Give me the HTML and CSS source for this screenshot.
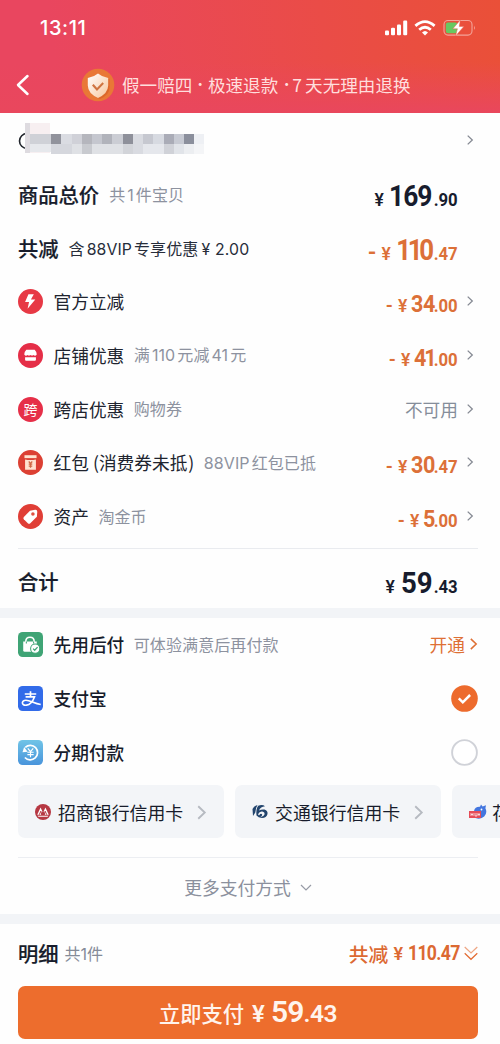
FILE: index.html
```html
<!DOCTYPE html>
<html lang="zh-CN">
<head>
<meta charset="UTF-8">
<meta name="viewport" content="width=device-width, initial-scale=1">
<title>确认付款</title>
<link rel="stylesheet" href="styles.css">
</head>
<body>
<svg width="0" height="0" class="defs">
  <symbol id="chev" viewBox="0 0 7 12"><path d="M1.2 1.6 5.8 6 1.2 10.4" fill="none" stroke="currentColor" stroke-width="1.3"/></symbol>
</svg>
<header class="header">
  <div class="status">
    <span class="clock">13:11</span>
    <div class="status-icons">
      <svg width="23" height="16" viewBox="0 0 23 16" fill="#fff"><rect x="0" y="10.5" width="4" height="4.8" rx="1.1"/><rect x="6" y="7.8" width="4" height="7.5" rx="1.1"/><rect x="12" y="4.4" width="4" height="10.9" rx="1.1"/><rect x="18.2" y=".6" width="4" height="14.7" rx="1.1"/></svg>
      <svg class="wifi" width="22" height="16" viewBox="0 0 22 16" fill="none" stroke="#fff" stroke-width="2.8"><path d="M1.4 5.9Q11-2.6 20.6 5.9"/><path d="M5.2 9.8Q11 4.8 16.8 9.8"/><path d="M8 12.6Q11 9.6 14 12.6L11 15.6Z" fill="#fff" stroke="none"/></svg>
      <svg class="battery" width="33" height="18" viewBox="0 0 33 18"><rect x="1" y="1.5" width="28" height="14.6" rx="4" fill="none" stroke="#fff" stroke-opacity=".48" stroke-width="1.1"/><rect x="2.8" y="3.4" width="11.5" height="10.9" rx="2.2" fill="#67c961"/><path d="M31 6.4Q32.6 8.6 31 11Z" fill="#fff" opacity=".55"/><path d="M17.3 1 9.8 9.8h4.6l-1.8 7.1 8.3-9.5h-4.6Z" fill="#fff" stroke="#e9614a" stroke-width=".5"/></svg>
    </div>
  </div>
  <div class="nav">
    <svg class="back" width="16" height="22" viewBox="0 0 16 22" fill="none" stroke="#fff" stroke-width="2.5" stroke-linecap="round" stroke-linejoin="round"><path d="M12.5 2 3 11l9.500 9"/></svg>
    <svg class="shield" width="34" height="34" viewBox="0 0 34 34"><defs><linearGradient id="sg" x1="0" y1="0" x2="1" y2="1"><stop stop-color="#fff"/><stop offset="1" stop-color="#f7c69c"/></linearGradient></defs><circle cx="17" cy="17" r="16.3" fill="#e97836"/><path d="m19 8 9.5 3v9q0 7-9.5 11-6-2-9-6Z" fill="#d65d25" opacity=".65"/><path d="M17 5.500Q21 9 27.200 10v7.500Q27 25.500 17 30 7 25.500 6.800 17.500V10Q13 9 17 5.500Z" fill="url(#sg)"/><path d="m11.800 16.700 4.200 4.800 6.200-6.400" fill="none" stroke="#cf7440" stroke-width="2.100"/></svg>
    <span class="promise"><i>假一赔四</i><b>·</b><i>极速退款</i><b class="near">·</b><i>7</i><i class="last">天无理由退换</i></span>
  </div>
</header>
<main>
  <section class="summary">
    <div class="row address">
      <svg class="mosaic" width="192" height="38" viewBox="0 0 192 38" shape-rendering="crispEdges">
        <circle cx="9" cy="20" r="7.500" fill="none" stroke="#20242b" stroke-width="1.600" shape-rendering="auto"/>
        <path d="M7 2h25v30H7Z" fill="#f7eff1"/>
        <path d="M7 2h5v30H7Z" fill="#dedbe0"/>
        <path d="M12 13h21v10H12Z" fill="#cfd1d7"/><path d="M12 23h21v8H12Z" fill="#e6e8ec"/>
        <path d="M33 13h10v10H33Z" fill="#91939c"/><path d="M43 13h11v10H43Z" fill="#dadce2"/><path d="M54 13h10v10H54Z" fill="#d0d1d8"/><path d="M64 13h10v10H64Z" fill="#b5b6bd"/><path d="M74 13h10v10H74Z" fill="#c5c7cf"/><path d="M84 13h10v10H84Z" fill="#b1b3bb"/><path d="M94 13h11v10H94Z" fill="#cbcdd4"/><path d="M105 13h10v10h-10Z" fill="#8e909a"/><path d="M115 13h10v10h-10Z" fill="#d9dbe1"/><path d="M125 13h10v10h-10Z" fill="#c6c8d0"/><path d="M135 13h11v10h-11Z" fill="#d7dae1"/><path d="M146 13h10v10h-10Z" fill="#aaacb7"/><path d="M156 13h10v10h-10Z" fill="#c7cad3"/><path d="M166 13h10v10h-10Z" fill="#8b8f9c"/><path d="M176 13h10v10h-10Z" fill="#eef0f4"/>
        <path d="M33 23h21v10H33Z" fill="#d5d7dd"/><path d="M54 23h10v10H54Z" fill="#dfe1e5"/><path d="M64 23h10v10H64Z" fill="#c8cacf"/><path d="M74 23h31v10H74Z" fill="#dfe1e5"/><path d="M105 23h10v10h-10Z" fill="#d2d4d9"/><path d="M115 23h10v10h-10Z" fill="#d9dbe1"/><path d="M125 23h21v10h-21Z" fill="#e5e7ec"/><path d="M146 23h10v10h-10Z" fill="#d0d2d8"/><path d="M156 23h10v10h-10Z" fill="#e1e4e9"/><path d="M166 23h10v10h-10Z" fill="#eceef1"/><path d="M176 23h10v10h-10Z" fill="#f4f5f7"/>
      </svg>
      <svg class="chev"><use href="#chev"/></svg>
    </div>
    <div class="row"><span class="title">商品总价</span><span class="note">共<em>1</em>件宝贝</span><span class="price large dark"><s>¥</s><span class="int sum">169</span><span class="dec">.90</span></span></div>
    <div class="row"><span class="title">共减</span><span class="note vip">含<em>88VIP</em>专享优惠<em>¥ 2.00</em></span><span class="price large"><q>-</q><s>¥</s><span class="int off">110</span><span class="dec">.47</span></span></div>
    <div class="row item">
      <svg class="icon" viewBox="0 0 24 24"><circle cx="12" cy="12" r="12" fill="#e73945"/><path d="m10 5-3.200 7.500h3.800L9.200 19l7.400-9h-4.200L15.200 5Z" fill="#fff"/></svg>
      <span class="label">官方立减</span><span class="price"><q>-</q><s>¥</s><span class="int">34</span><span class="dec">.00</span></span><svg class="chev"><use href="#chev"/></svg>
    </div>
    <div class="row item">
      <svg class="icon" viewBox="0 0 24 24"><circle cx="12" cy="12" r="12" fill="#e52e47"/><path d="M8 6.500h8q2 2 2 4.500-1.500 2-3 .5-1.500 1.200-3 0-1.500 1.200-3 0-1.500 1.500-3-.5 0-2.500 2-4.500Z" fill="#fff"/><path d="M6.800 13.700h10.400V16q0 1-1 1H7.800q-1 0-1-1Z" fill="#fff"/></svg>
      <span class="label">店铺优惠</span><span class="note">满<em>110</em>元减<em>41</em>元</span><span class="price"><q>-</q><s>¥</s><span class="int fortyone">41</span><span class="dec">.00</span></span><svg class="chev"><use href="#chev"/></svg>
    </div>
    <div class="row item">
      <span class="icon cross">跨</span>
      <span class="label">跨店优惠</span><span class="note">购物券</span><span class="unavailable">不可用</span><svg class="chev"><use href="#chev"/></svg>
    </div>
    <div class="row item">
      <svg class="icon" viewBox="0 0 24 24"><circle cx="12" cy="12" r="12" fill="#dc4033"/><path d="M6.200 5h11.600v2.800H6.200Z" fill="#ffe3d0"/><path d="M6.800 9q5.200 1.200 10.400 0v10H6.800Z" fill="#ffe3d0"/><path d="m10.300 11 1.700 1.800 1.700-1.800M12 12.500V17m-1.700-3.400h3.400m-3.400 1.800h3.400" fill="none" stroke="#cf6a45" stroke-width="1.200"/></svg>
      <span class="label">红包<em class="paren">(</em>消费券未抵<em class="paren end">)</em></span><span class="note"><em class="first">88VIP</em>红包已抵</span><span class="price"><q>-</q><s>¥</s><span class="int">30</span><span class="dec">.47</span></span><svg class="chev"><use href="#chev"/></svg>
    </div>
    <div class="row item">
      <svg class="icon" viewBox="0 0 24 24"><circle cx="12" cy="12" r="12" fill="#e03e36"/><path d="M11.500 6.500 16.500 5.600q2-.2 2 1.800l-.4 4.800-6.300 6.300q-1.200 1-2.400 0L5.600 14.700q-1-1.200 0-2.300Z" fill="#fff"/><circle cx="14.300" cy="9.700" r="1.700" fill="#df5042"/></svg>
      <span class="label">资产</span><span class="note">淘金币</span><span class="price"><q>-</q><s>¥</s><span class="int one">5</span><span class="dec">.00</span></span><svg class="chev"><use href="#chev"/></svg>
    </div>
    <div class="total"><span class="title">合计</span><span class="price large dark"><s>¥</s><span class="int">59</span><span class="dec">.43</span></span></div>
  </section>
  <section class="payment">
    <div class="row item method">
      <svg class="icon" viewBox="0 0 24 24"><rect width="24" height="24" rx="4.500" fill="#3fa475"/><path d="M5 9h13v10H6.500Q5 19 5 17.500Z" fill="#fff"/><path d="M7.500 11V9q0-4 4-4t4 4v2" fill="none" stroke="#fff" stroke-width="1.500"/><path d="M8 9v2m7-2v2" stroke="#3fa475"/><circle cx="16.500" cy="16" r="4.400" fill="#fff" stroke="#3fa475"/><path d="m14.500 16 1.500 1.500 2.800-3" fill="none" stroke="#3fa475" stroke-width="1.200"/></svg>
      <span class="label">先用后付</span><span class="note">可体验满意后再付款</span><span class="open">开通<svg><use href="#chev"/></svg></span>
    </div>
    <div class="row item method">
      <svg class="icon" viewBox="0 0 24 24"><rect width="24" height="24" rx="4.500" fill="#326be9"/><path d="M6.500 7.700h11M12 5v5.500M7.300 10.500h8.500c-1.500 4-4.400 7.500-7.600 7.900-5.200.6-5.200-4.600-.6-4.700 4.200 0 7.400 2.900 14.200 4.100" fill="none" stroke="#fff" stroke-width="1.600"/></svg>
      <span class="label">支付宝</span><svg class="radio" viewBox="0 0 27 27"><circle cx="13.500" cy="13.500" r="13.300" fill="#ed6b2d"/><path d="m7.800 13.400 4 3.900 7.300-7.300" fill="none" stroke="#fff" stroke-width="2.500"/></svg>
    </div>
    <div class="row item method">
      <svg class="icon" viewBox="0 0 24 24"><defs><linearGradient id="bg" x1="0" y1="0" x2="0" y2="1"><stop stop-color="#70c4e7"/><stop offset="1" stop-color="#4994db"/></linearGradient></defs><rect width="24" height="24" rx="4.500" fill="url(#bg)"/><path d="M7 7a7 7 0 1 1-.4 9.800" fill="none" stroke="#fff" stroke-width="1.600"/><path d="m4.300 11.800 1.600-5 3.300 4.500Z" fill="#fff"/><path d="m9.400 8 2.600 3.200L14.600 8M12 11v5.500m-3-4.700h6m-6 2.200h6" fill="none" stroke="#fff" stroke-width="1.100"/></svg>
      <span class="label">分期付款</span><svg class="radio" viewBox="0 0 27 27"><circle cx="13.500" cy="13.500" r="12.400" fill="#fff" stroke="#d0d2d8" stroke-width="1.900"/></svg>
    </div>
    <div class="cards">
      <div class="card"><svg class="bank" viewBox="0 0 16 16"><circle cx="8" cy="8" r="8" fill="#b63843"/><path d="M2.200 10.700 5.600 3.500 7.400 7.500 6 10.700ZM13.800 10.700 10.400 3.500 8.600 7.500 10 10.700ZM2.500 11.700h11l-1 1h-9Z" fill="#fff"/><path d="m4.300 10.700 1.500-3.500 1.100 3.500m4.800 0-1.500-3.500-1.100 3.500" fill="none" stroke="#b63843"/></svg><span>招商银行信用卡</span><svg class="card-chev"><use href="#chev"/></svg></div>
      <div class="card"><svg class="bank" viewBox="0 0 16 16"><path d="M.5 5Q2.500 1.500 5.500 1 3.500 4 3.300 8.500L1 12Z" fill="#22446d"/><path d="M6.200 1.700Q10.500.2 13 2.200 8.500 2.700 7 6.500 9.500 5 12.500 5.500 16 6.700 15.500 10q-1 4-5.500 4-3.800-.2-5.500-2.500Q3.800 5 6.200 1.700Z" fill="#22446d"/><path d="M6 10.300Q7.500 7.200 10.300 7.600q2.700.7 2.200 3Q11.600 13 8.500 12.600q2-.5 1.700-2-.6-1.300-2-.7L7 11.400Z" fill="#f3f5f8"/></svg><span>交通银行信用卡</span><svg class="card-chev"><use href="#chev"/></svg></div>
      <div class="card"><svg class="bank huabei" viewBox="0 0 18 16"><path d="M5 7Q6 2.500 11 2.800L12 .5l1.600 2L17 1.300l-.6 3q2.300 4.500-1.200 8.300-3.700 3.200-8.700 1.400Z" fill="#4376df"/><circle cx="12.500" cy="5.500" r=".9" fill="#fff"/><rect y="7" width="12" height="7" fill="#e54b57"/><path d="M2 9v3m0-1.500h2M4 9v3m2-3v3h2V9m2 0v3m-1.300-1.500H11" fill="none" stroke="#fff" stroke-width=".7"/></svg><span>花呗</span></div>
    </div>
    <div class="more">更多支付方式<svg width="12" height="7" viewBox="0 0 12 7"><path d="m1 1 5 5 5-5" fill="none" stroke="#979ba6" stroke-width="1.200"/></svg></div>
  </section>
  <footer class="footer">
    <div class="detail"><span class="title">明细</span><span class="count">共<em>1</em>件</span><span class="saving">共减<em class="yen">¥</em><em class="amount">110.47</em><svg width="14" height="15" viewBox="0 0 14 15" fill="none" stroke="#e36b32" stroke-width="1.200"><path d="m.7 1 6.300 6 6.300-6" opacity=".6"/><path d="m.7 7.300 6.300 6 6.300-6"/></svg></span></div>
    <button class="pay"><span class="pay-label">立即支付</span><span class="pay-yen">¥</span><span class="pay-int">59</span><span class="pay-dec">.43</span></button>
  </footer>
</main>
</body>
</html>
```
FILE: styles.css
```css
* { box-sizing: border-box; }
body { margin: 0; width: 500px; height: 1044px; overflow: hidden; background: #fefefe; color: #171c2b; font-family: "Noto Sans CJK SC", sans-serif; }
i, em { font-style: normal; }
s { text-decoration: none; }
q::before, q::after { content: none; }
.defs { position: absolute; }
.header { height: 113px; background: linear-gradient(180deg, transparent 55%, #e9475d 100%), linear-gradient(82deg, #e9465f 12%, #ea4c47 65%, #ea5038); color: #fff; }
.status { height: 56px; display: flex; justify-content: space-between; padding: 0 24px 0 40px; }
.clock { font: 500 20px/56px Inter, sans-serif; letter-spacing: .6px; }
.status-icons { display: flex; align-items: flex-start; padding-top: 20px; }
.wifi { margin-left: 6px; }
.battery { margin-left: 7px; margin-top: -1px; }
.nav { height: 57px; display: flex; align-items: center; padding-left: 15px; }
.shield { margin-left: 50px; }
.promise { display: flex; margin-left: 7px; font-size: 17.600px; line-height: 30px; color: #ffdedd; white-space: nowrap; }
.promise b { width: 15.500px; text-align: center; font-weight: 700; font-family: Inter; }
.promise .near { width: 14px; padding-left: 3px; }
.promise .last { margin-left: 3px; }
.summary { height: 495px; }
.row { height: 53.800px; display: flex; align-items: center; padding: 0 21px 0 18px; }
.address { height: 54px; padding-bottom: 1px; }
.chev { width: 8px; height: 12px; margin-left: 8px; color: #858993; flex: none; }
.address .chev { margin-left: auto; margin-right: 5px; }
.title { font-size: 20.300px; font-weight: 500; line-height: 30px; -webkit-text-stroke: .2px; }
.note { margin-left: 10px; color: #8d929f; font-size: 16px; line-height: 28px; white-space: nowrap; letter-spacing: .1px; }
.note em { font: 16px Inter, sans-serif; margin: 0 2px; }
.note .first { margin-left: 0; }
.vip { color: #272d3a; }
.vip em { font-size: 15.800px; }
.vip em:last-child { margin-left: 3px; letter-spacing: .2px; }
.price { margin-left: auto; margin-right: 21px; padding-top: 9px; display: flex; align-items: baseline; color: #dc7038; font-family: Roboto, sans-serif; font-weight: 700; white-space: nowrap; line-height: 32px; }
.price.dark { color: #171c2d; }
.price s { font-size: 17.500px; font-weight: 600; width: 10px; margin-right: 6px; }
.price q { font-size: 18px; margin-right: 5px; }
.item .price s { margin-right: 3.500px; }
.large q { font-size: 22px; }
.int { display: inline-block; width: 24px; font-size: 24.500px; letter-spacing: -.5px; transform: scaleX(.88); transform-origin: left; }
.one { width: 12px; }
.fortyone { width: 21px; letter-spacing: -2.500px; }
.dec { font-size: 18px; letter-spacing: -.1px; transform: scaleX(.93); transform-origin: right; margin-left: -1px; }
.item .dec { margin-left: -3px; }
.large .int { width: 32px; font-size: 30px; letter-spacing: 0; transform: scaleX(.92); }
.large .sum { width: 43px; letter-spacing: -1.200px; transform: scaleX(.88); text-indent: -1px; }
.large .off { width: 36px; letter-spacing: -3.800px; transform: scaleX(.86); text-indent: -1px; }
.item { padding-right: 22px; }
.item .price, .unavailable { margin-right: 0; }
.item .price { padding-top: 7px; }
.icon { width: 25px; height: 25px; flex: none; }
.label { margin: -1px 0 0 10.500px; font-size: 17.700px; line-height: 28px; white-space: nowrap; color: #20242f; }
.item .note { margin-top: -2px; margin-left: 9.500px; }
.paren { margin-left: 4px; }
.paren.end { margin-left: 1px; }
.cross { border-radius: 50%; background: #e62f48; color: #fff; font-size: 14px; line-height: 24px; text-align: center; }
.unavailable { margin-left: auto; margin-top: -1px; font-size: 17.700px; color: #858d9a; }
.item .chev { margin-right: 4px; margin-top: -1px; }
.total { height: 60px; margin: 4px 22px 0 18px; border-top: 1px solid #e9ebef; display: flex; align-items: center; padding-top: 6px; }
.total .price { margin-right: 20px; padding-top: 8px; }
.payment { border-top: 10px solid #f2f4f7; height: 306px; }
.method .label { font-weight: 500; color: #171c2b; }
.open { margin-left: auto; margin-top: -1px; color: #de7035; font-size: 17.700px; display: flex; align-items: center; gap: 4px; }
.open svg { width: 9px; height: 14px; }
.radio { width: 27px; height: 27px; margin-left: auto; }
.cards { display: flex; gap: 11px; height: 53px; margin: 5.600px 0 0 18px; width: 482px; overflow: hidden; }
.card { width: 206px; flex: none; background: #f3f5f8; border-radius: 7px; display: flex; align-items: center; padding: 2px 17px 0 17px; white-space: nowrap; font-size: 17.900px; }
.bank { width: 16px; height: 16px; margin-right: 7px; flex: none; }
.huabei { width: 18px; margin-right: 5px; }
.card-chev { width: 11px; height: 17px; margin-left: auto; color: #b6bac1; }
.more { height: 58px; margin: 19px 22px 0 18px; border-top: 1px solid #eceef2; display: flex; justify-content: center; align-items: center; gap: 9px; font-size: 17.800px; color: #8b909d; padding-top: 2px; }
.footer { border-top: 10px solid #f2f4f7; height: 130px; padding: 0 22px 0 18px; }
.detail { height: 62px; display: flex; align-items: center; padding-bottom: 4px; }
.count { margin-left: 6px; font-size: 16px; color: #858b98; }
.count em { font: 16px Inter, sans-serif; }
.saving { margin-left: auto; display: flex; align-items: center; font-size: 19.800px; font-weight: 500; color: #dc6932; line-height: 29px; }
.saving .yen, .amount { font-family: Roboto, sans-serif; font-weight: 700; }
.saving .yen { margin: 1px 5px 0 5px; font-size: 18px; font-weight: 600; }
.saving .amount { width: 50px; font-size: 20.500px; margin: 1px 6px 0 0; letter-spacing: -.8px; transform: scaleX(.86); transform-origin: left; }
.pay { width: 100%; height: 53px; border: 0; border-radius: 7px; background: #ed6d2d; color: #fff4ed; padding: 0; font: 500 21.300px "Noto Sans CJK SC", sans-serif; display: flex; justify-content: center; align-items: baseline; line-height: 52px; }
.pay-yen, .pay-int, .pay-dec { font-family: Roboto, sans-serif; font-weight: 600; }
.pay-yen { margin: 0 6px 0 8px; font-size: 24px; }
.pay-int { font-size: 30px; letter-spacing: -.8px; }
.pay-dec { font-size: 24.500px; letter-spacing: -.5px; }
```
